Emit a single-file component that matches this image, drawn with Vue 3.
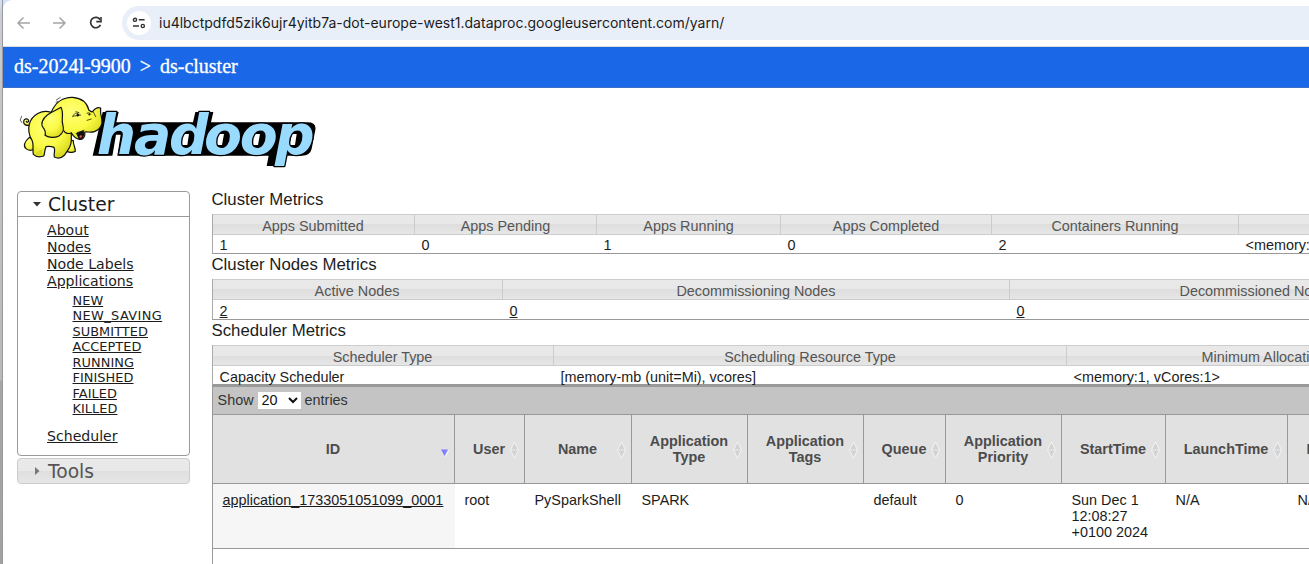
<script setup>
const states = ['NEW', 'NEW_SAVING', 'SUBMITTED', 'ACCEPTED', 'RUNNING', 'FINISHED', 'FAILED', 'KILLED']
const links = ['About', 'Nodes', 'Node Labels', 'Applications']

const sections = [
  {
    title: 'Cluster Metrics',
    kind: 'cluster',
    columns: [
      ['Apps Submitted', '1'],
      ['Apps Pending', '0'],
      ['Apps Running', '1'],
      ['Apps Completed', '0'],
      ['Containers Running', '2'],
      ['', '<memory:2'],
    ],
  },
  {
    title: 'Cluster Nodes Metrics',
    kind: 'nodes',
    linked: true,
    columns: [
      ['Active Nodes', '2'],
      ['Decommissioning Nodes', '0'],
      ['Decommissioned Nodes', '0'],
    ],
  },
  {
    title: 'Scheduler Metrics',
    kind: 'scheduler',
    columns: [
      ['Scheduler Type', 'Capacity Scheduler'],
      ['Scheduling Resource Type', '[memory-mb (unit=Mi), vcores]'],
      ['Minimum Allocation', '<memory:1, vCores:1>'],
    ],
  },
]

const appColumns = [
  ['ID', 'application_1733051051099_0001'],
  ['User', 'root'],
  ['Name', 'PySparkShell'],
  ['Application Type', 'SPARK'],
  ['Application Tags', ''],
  ['Queue', 'default'],
  ['Application Priority', '0'],
  ['StartTime', 'Sun Dec 1 12:08:27 +0100 2024'],
  ['LaunchTime', 'N/A'],
  ['FinishTime', 'N/A'],
]
</script>

<template>
  <div class="screen">
    <div class="edge"></div>
    <div class="window">
      <div class="toolbar">
        <svg class="nav" width="120" height="46" viewBox="0 0 120 46" fill="none" stroke-width="1.5">
          <path d="M28 23H16.5M21.5 17.5L16 23L21.5 28.5" stroke="#a5a5a5" />
          <path d="M51 23H62.5M57.5 17.5L63 23L57.5 28.5" stroke="#a5a5a5" />
          <path d="M98.2 19.7A5.2 5.2 0 1 0 98.5 24.8" stroke="#333" stroke-width="1.7" />
          <path d="M99 17V21.6H94.3" stroke="#333" stroke-width="1.6" />
        </svg>
        <div class="address">
          <span class="site">
            <svg width="14" height="12" viewBox="0 0 14 12" fill="none" stroke="#333" stroke-width="1.4">
              <circle cx="3" cy="2.8" r="1.6" />
              <path d="M6.8 2.8H12.6M1 9H7" />
              <circle cx="10.8" cy="9" r="1.6" />
            </svg>
          </span>
          <span class="url">iu4lbctpdfd5zik6ujr4yitb7a-dot-europe-west1.dataproc.googleusercontent.com/yarn/</span>
        </div>
      </div>

      <div class="crumbs"><span>ds-2024l-9900</span><span class="gt">&gt;</span><span>ds-cluster</span></div>

      <div class="masthead">
        <svg class="logo" width="320" height="85" viewBox="0 0 960 255">
          <defs>
            <radialGradient id="skin" cx="0.4" cy="0.35" r="0.7">
              <stop offset="0" stop-color="#ffff78" />
              <stop offset="0.6" stop-color="#fafa45" />
              <stop offset="1" stop-color="#d9d91e" />
            </radialGradient>
          </defs>
          <path d="M248 197L278 66H326L319 97H549L556 66H610L603 97H892Q920 97 916 120L905 176Q900 197 876 197H828L822 228H770L776 197Z" />
          <path d="M318 134H332L322 198H307ZM517 132H537L532 165H512ZM620 132H642L636 165H614ZM726 132H750L744 165H721ZM846 132H860L855 165H838Z" fill="#fff" />
          <text class="word" x="260 372 477 582 689 795" y="192">hadoop</text>
          <g stroke="#111" stroke-width="3.6" stroke-linejoin="round" stroke-linecap="round" fill="url(#skin)">
            <path d="M60 104C50 110 40 103 41 94C42 86 52 84 56 91C58 96 50 99 49 94" />
            <path d="M58 142C43 155 39 168 48 176C56 183 66 181 72 178L78 156Z" />
            <path d="M174 150L190 152C188 164 198 174 196 184C187 190 173 187 165 181Z" />
            <path d="M123 67C96 57 66 75 58 102C54 119 56 135 66 151C72 163 67 180 70 193C78 201 92 201 101 198C105 190 103 181 108 170C116 168 125 169 132 172C137 183 130 193 133 201C145 207 157 202 164 195C170 183 184 174 184 150L184 125L154 72Z" />
            <path d="M124 66C136 37 160 21 188 22C216 24 232 41 237 61L247 66C254 56 263 51 272 54C271 63 270 70 275 85C279 103 271 119 253 125C242 129 231 124 224 126C227 138 220 151 208 148C196 145 190 139 184 128C173 134 164 128 160 121Z" />
            <path d="M153 52C138 62 126 64 112 75C98 86 91 101 99 112C106 121 108 128 105 136C114 143 133 145 147 138C161 129 163 119 158 102C153 88 163 72 153 52Z" />
            <g fill="none" stroke-width="2.2">
              <path d="M190 76C194 68 203 66 208 75M187 79L212 75M230 71C234 66 239 68 243 73M198 65L207 68M236 60L243 66M231 91L244 87" />
              <path d="M250 66L257 80M222 121C209 128 202 124 198 131" />
            </g>
            <ellipse cx="203" cy="75" rx="3.5" ry="4.5" fill="#111" stroke="none" />
            <ellipse cx="238" cy="73" rx="2.5" ry="3.5" fill="#111" stroke="none" />
            <path d="M201 131L219 123C225 137 216 148 208 146Z" fill="#111" />
            <path d="M208 139L214 134L216 141L210 144Z" fill="#e8554a" stroke="none" />
            <path d="M80 186L98 178L95 194L76 195ZM138 192L158 186L153 199L139 200Z" fill="#dada25" stroke="none" />
            <path d="M139 30L151 22M138 37L144 34M31 89L35 79M36 98L31 91" fill="none" stroke-width="2" />
          </g>
        </svg>
      </div>

      <div class="content">
        <div class="sidebar">
          <div class="panel">
            <div class="panel-title">
              <svg width="8" height="5" viewBox="0 0 8 5"><path d="M0 0H8L4 4.5Z" fill="#333" /></svg>
              <span>Cluster</span>
            </div>
            <div class="links">
              <a v-for="link in links" :key="link">{{ link }}</a>
              <div class="states"><a v-for="state in states" :key="state">{{ state }}</a></div>
              <a>Scheduler</a>
            </div>
          </div>
          <div class="panel-title closed">
            <svg width="5" height="8" viewBox="0 0 5 8"><path d="M0 0V8L4.5 4Z" fill="#777" /></svg>
            <span>Tools</span>
          </div>
        </div>

        <div class="main">
          <template v-for="section in sections" :key="section.kind">
            <div class="heading">{{ section.title }}</div>
            <div class="metrics" :class="[section.kind, { linked: section.linked }]">
              <div v-for="column in section.columns" :key="column[0]" class="metric">
                <div class="label">{{ column[0] }}</div>
                <div class="value"><span>{{ column[1] }}</span></div>
              </div>
            </div>
          </template>

          <div class="apps">
            <div class="length">
              <span>Show</span>
              <span class="select">20
                <svg width="10" height="7" viewBox="0 0 10 7" fill="none" stroke="#111" stroke-width="2"><path d="M1 1L5 5L9 1" /></svg>
              </span>
              <span>entries</span>
            </div>
            <div class="row head">
              <div v-for="(column, i) in appColumns" :key="column[0]" class="th">
                <span>{{ column[0] }}</span>
                <svg v-if="i === 0" class="sorted" width="9" height="8" viewBox="0 0 9 8"><path d="M1 .5H8L4.5 7Z" fill="#8080ff" /><path d="M5 8L9 1" stroke="#fff" stroke-width=".7" /></svg>
                <svg v-else class="sort" width="9" height="18" viewBox="0 0 9 18">
                  <path d="M.8 8.5L4.5 .8L8.2 8.5ZM.8 9.5L4.5 17.2L8.2 9.5Z" fill="#d2d2d2" />
                  <path d="M.6 9L4.5 .8L8.4 9L4.5 17.2Z" fill="none" stroke="#f6f6f6" stroke-width=".9" />
                  <path d="M1 9H8" stroke="#e6e6e6" stroke-width="1" />
                </svg>
              </div>
            </div>
            <div class="row body">
              <div v-for="column in appColumns" :key="column[0]" class="td"><span>{{ column[1] }}</span></div>
            </div>
          </div>
        </div>
      </div>
    </div>
  </div>
</template>

<style>
body {
  margin: 0;
  overflow: hidden;
}
</style>

<style scoped>
.screen {
  display: flex;
  box-sizing: border-box;
  width: 1309px;
  height: 564px;
  overflow: hidden;
  background: #d3e2fb;
  color: #1c1c1c;
  font-family: "Liberation Sans", Arial, sans-serif;
  font-size: 14.4px;
}
.edge {
  flex: none;
  box-sizing: border-box;
  width: 3px;
  height: 564px;
  background: linear-gradient(#d3e2fb 0, #c9cdd6 14px, #c4c4c4 120px, #b9b9b9 380px, #a6a6a6 381px, #a2a2a2 100%);
  border-right: 1px solid #999;
}
.window {
  width: 1306px;
  height: 564px;
  flex: none;
  overflow: hidden;
  background: #fff;
  border-top-left-radius: 9px;
}
.toolbar {
  display: flex;
  align-items: center;
  box-sizing: border-box;
  height: 47px;
  border-bottom: 1px solid #dcdcdc;
}
.nav {
  flex: none;
  margin-left: -1px;
}
.address {
  display: flex;
  align-items: center;
  flex: 1;
  height: 34px;
  border-radius: 17px 0 0 17px;
  background: #e9eff9;
}
.site {
  display: flex;
  align-items: center;
  justify-content: center;
  width: 24px;
  height: 24px;
  margin-left: 5px;
  border-radius: 50%;
  background: #fff;
}
.url {
  margin-left: 8px;
  padding-bottom: 1px;
  font-family: Inter, sans-serif;
  font-size: 14px;
  white-space: nowrap;
}
.crumbs {
  display: flex;
  align-items: center;
  box-sizing: border-box;
  height: 41px;
  padding: 0 0 2px 11px;
  border-bottom: 1px solid #3a70c8;
  background: #1a68e8;
  color: #fff;
  font: 20px "Liberation Serif", "Times New Roman", serif;
  -webkit-text-stroke: 0.3px #fff;
}
.gt {
  margin: 0 9px;
}
.masthead {
  height: 101px;
}
.logo {
  display: block;
  padding: 2px 0 0 7px;
}
.word {
  fill: #99dbff;
  stroke: #000;
  stroke-width: 8px;
  stroke-linejoin: round;
  paint-order: stroke;
  font: italic bold 166px "DejaVu Sans", sans-serif;
}
.content {
  display: flex;
  align-items: flex-start;
}
.sidebar {
  flex: none;
  width: 173px;
  margin: 2px 0 0 14px;
  font-family: "DejaVu Sans", Verdana, sans-serif;
}
.panel {
  box-sizing: border-box;
  height: 265px;
  border: 1px solid #999;
  border-radius: 4px;
}
.panel-title {
  display: flex;
  align-items: center;
  box-sizing: border-box;
  height: 25px;
  padding-left: 15px;
  border-bottom: 1px solid #999;
  font-size: 18.7px;
}
.panel-title span {
  margin-left: 7px;
}
.closed {
  height: 26px;
  margin-top: 2px;
  padding-left: 17px;
  border: 1px solid #ccc;
  border-radius: 4px;
  background: linear-gradient(#eaeaea 0, #e8e8e8 50%, #dfdfdf 50%, #e6e6e6 100%);
  color: #555;
}
.closed span {
  margin-left: 8px;
}
.links {
  padding: 5px 0 0 29px;
}
.links a {
  display: block;
  width: max-content;
  height: 17px;
  font-size: 14.1px;
  line-height: 17px;
  text-decoration: underline;
}
.links .states {
  padding: 3px 0 11px 25.5px;
}
.links .states a {
  height: 15.45px;
  font-size: 12.9px;
  letter-spacing: 0.05px;
  line-height: 15.45px;
}
.links .states a:nth-child(2) {
  letter-spacing: 0.4px;
}
.main {
  flex: none;
  width: 1300px;
  margin-left: 22px;
}
.heading {
  height: 25px;
  margin-left: -0.5px;
  font-size: 16.8px;
  line-height: 21px;
}
.metrics {
  display: grid;
  width: max-content;
}
.cluster {
  grid-template-columns: 202px 182px 184px 211px 247px 300px;
}
.nodes {
  grid-template-columns: 290px 507px 496px;
}
.scheduler {
  grid-template-columns: 341px 513px 394px;
}
.metric {
  box-sizing: border-box;
  height: 40px;
  border-bottom: 1px solid #999;
}
.nodes .metric {
  height: 41px;
}
.metric:first-child {
  border-left: 1px solid #aaa;
}
.label {
  box-sizing: border-box;
  height: 21px;
  border: solid #ccc;
  border-width: 1px 0 1px 1px;
  background: linear-gradient(#e9e9e9 0, #e8e8e8 50%, #dedede 50%, #e6e6e6 100%);
  color: #555;
  line-height: 23px;
  text-align: center;
}
.metric:first-child .label {
  padding-right: 1px;
  border-left: 0;
}
.value {
  height: 18px;
  padding-left: 7.5px;
  line-height: 20px;
  white-space: nowrap;
}
.nodes .value,
.scheduler .value {
  line-height: 23px;
}
.metric:first-child .value {
  padding-left: 6.6px;
}
.linked .value span {
  text-decoration: underline;
}
.apps {
  height: 200px;
  border-left: 1px solid #999;
}
.length {
  display: flex;
  align-items: center;
  box-sizing: border-box;
  height: 30px;
  padding: 0 0 1px 4.6px;
  border-top: 2px solid #999;
  border-bottom: 1px solid #999;
  background: #c4c4c4;
  color: #333;
}
.select {
  display: flex;
  align-items: center;
  justify-content: space-between;
  box-sizing: border-box;
  width: 43px;
  height: 17px;
  margin: 0 4px;
  padding: 0 3px 0 4px;
  background: #fff;
  color: #111;
}
.row {
  display: grid;
  grid-template-columns: 242px 70px 107px 116px 116px 82px 116px 104px 122px 150px;
  border-bottom: 1px solid #999;
}
.head {
  height: 68px;
}
.th {
  position: relative;
  display: flex;
  align-items: center;
  justify-content: center;
  box-sizing: border-box;
  padding: 0 18.5px 0 17.5px;
  border-right: 1px solid #999;
  background: #e1e1e1;
  color: #4c4c4c;
  font-weight: bold;
  line-height: 16px;
  text-align: center;
}
.th:last-child {
  justify-content: flex-start;
  padding-left: 18.5px;
}
.sorted {
  position: absolute;
  right: 5px;
  bottom: 26px;
}
.sort {
  position: absolute;
  right: 5px;
  top: 26px;
}
.body {
  height: 64px;
}
.td {
  padding: 8px 10px 0 9.5px;
  line-height: 16px;
}
.td:first-child {
  background: #f6f6f6;
  text-decoration: underline;
}
</style>
